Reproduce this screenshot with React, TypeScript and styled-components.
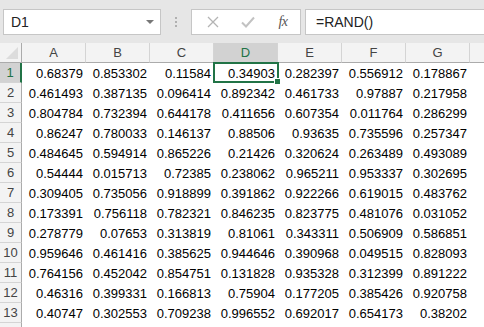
import React from "react";
import styled, { createGlobalStyle } from "styled-components";

const GREEN = "#217346";

const COLUMNS = ["A", "B", "C", "D", "E", "F", "G"];

const DATA: string[][] = [
  ["0.68379", "0.853302", "0.11584", "0.34903", "0.282397", "0.556912", "0.178867"],
  ["0.461493", "0.387135", "0.096414", "0.892342", "0.461733", "0.97887", "0.217958"],
  ["0.804784", "0.732394", "0.644178", "0.411656", "0.607354", "0.011764", "0.286299"],
  ["0.86247", "0.780033", "0.146137", "0.88506", "0.93635", "0.735596", "0.257347"],
  ["0.484645", "0.594914", "0.865226", "0.21426", "0.320624", "0.263489", "0.493089"],
  ["0.54444", "0.015713", "0.72385", "0.238062", "0.965211", "0.953337", "0.302695"],
  ["0.309405", "0.735056", "0.918899", "0.391862", "0.922266", "0.619015", "0.483762"],
  ["0.173391", "0.756118", "0.782321", "0.846235", "0.823775", "0.481076", "0.031052"],
  ["0.278779", "0.07653", "0.313819", "0.81061", "0.343311", "0.506909", "0.586851"],
  ["0.959646", "0.461416", "0.385625", "0.944646", "0.390968", "0.049515", "0.828093"],
  ["0.764156", "0.452042", "0.854751", "0.131828", "0.935328", "0.312399", "0.891222"],
  ["0.46316", "0.399331", "0.166813", "0.75904", "0.177205", "0.385426", "0.920758"],
  ["0.40747", "0.302553", "0.709238", "0.996552", "0.692017", "0.654173", "0.38202"],
];

const ACTIVE_ROW = 0;
const ACTIVE_COL = 3;

const App = () => {
  return (
    <>
      <GlobalStyle />
      <S.Page>
        <S.Toolbar>
          <S.NameBox>
            <span>D1</span>
            <S.Caret />
          </S.NameBox>
          <S.Grip>
            <i />
            <i />
            <i />
          </S.Grip>
          <S.ButtonBox>
            <S.IconSlot>
              <svg width="12" height="12" viewBox="0 0 12 12">
                <path d="M1 1 L11 11 M11 1 L1 11" stroke="#b4b4b4" strokeWidth="1.3" fill="none" />
              </svg>
            </S.IconSlot>
            <S.IconSlot>
              <svg width="14" height="12" viewBox="0 0 14 12">
                <path d="M1 6.5 L5 10.5 L13 1.5" stroke="#c2c2c2" strokeWidth="2" fill="none" />
              </svg>
            </S.IconSlot>
            <S.IconSlot>
              <S.Fx>fx</S.Fx>
            </S.IconSlot>
          </S.ButtonBox>
          <S.FormulaBox>=RAND()</S.FormulaBox>
        </S.Toolbar>

        <S.Sheet>
          <S.Corner>
            <svg width="12" height="12" viewBox="0 0 12 12">
              <path d="M12 0 L12 12 L0 12 Z" fill="#dcdcdc" />
            </svg>
          </S.Corner>
          {COLUMNS.map((c, i) => (
            <S.ColHeader key={c} $active={i === ACTIVE_COL}>
              {c}
            </S.ColHeader>
          ))}
          <S.ColHeader $active={false} $last />

          {DATA.map((row, r) => (
            <React.Fragment key={r}>
              <S.RowHeader $active={r === ACTIVE_ROW}>{r + 1}</S.RowHeader>
              {row.map((v, c) => (
                <S.Cell key={c}>
                  {v}
                  {r === ACTIVE_ROW && c === ACTIVE_COL && (
                    <S.Selection>
                      <S.Handle />
                    </S.Selection>
                  )}
                </S.Cell>
              ))}
              <S.Cell />
            </React.Fragment>
          ))}
          {/* row 14 is only a sliver at the bottom edge, so its label stays out of view */}
          <S.RowHeader $active={false} />
        </S.Sheet>
      </S.Page>
    </>
  );
};

const GlobalStyle = createGlobalStyle`
  html, body {
    margin: 0;
    padding: 0;
    background: #ffffff;
    overflow: hidden;
  }
`;

const S = {
  Page: styled.div`
    width: 484px;
    height: 327px;
    overflow: hidden;
    font-family: "Liberation Sans", Arial, sans-serif;
    color: #000;
  `,

  Toolbar: styled.div`
    display: flex;
    align-items: flex-start;

    height: 43px;
    box-sizing: border-box;
    padding: 9px 0 0 3px;

    background: #e6e6e6;
  `,

  NameBox: styled.div`
    display: flex;
    align-items: center;
    justify-content: space-between;

    width: 158px;
    height: 26px;
    box-sizing: border-box;
    padding: 0 6px 0 7px;

    background: #fff;
    border: 1px solid #c6c6c6;

    font-size: 14px;
    color: #222;
  `,

  Caret: styled.div`
    width: 0;
    height: 0;
    border-left: 4px solid transparent;
    border-right: 4px solid transparent;
    border-top: 4px solid #777;
  `,

  Grip: styled.div`
    display: flex;
    flex-direction: column;
    align-items: center;
    gap: 2px;

    width: 30px;
    padding-top: 8px;

    i {
      display: block;
      width: 2px;
      height: 2px;
      background: #b0b0b0;
    }
  `,

  ButtonBox: styled.div`
    display: flex;
    align-items: center;
    justify-content: space-between;

    width: 110px;
    height: 26px;
    box-sizing: border-box;
    padding: 0 9px 0 13px;

    background: #fff;
    border: 1px solid #c6c6c6;
  `,

  IconSlot: styled.div`
    display: flex;
    align-items: center;
    justify-content: center;
    width: 16px;
    height: 16px;
  `,

  Fx: styled.span`
    font-family: "Liberation Serif", "Times New Roman", serif;
    font-style: italic;
    font-size: 14px;
    color: #555;
    letter-spacing: -0.5px;
  `,

  FormulaBox: styled.div`
    display: flex;
    align-items: center;
    flex: 1;

    height: 26px;
    box-sizing: border-box;
    margin-left: 4px;
    padding-left: 10px;

    background: #fff;
    border: 1px solid #c6c6c6;
    border-right: none;

    font-size: 14px;
    color: #222;
  `,

  Sheet: styled.div`
    display: grid;
    grid-template-columns: 22px repeat(7, 64px) 1fr;
    grid-auto-rows: 20px;
    font-size: 13px;
  `,

  Corner: styled.div`
    display: flex;
    align-items: flex-end;
    justify-content: flex-end;
    box-sizing: border-box;
    padding: 0 3px 3px 0;

    background: #f3f3f3;
    border-right: 1px solid #ababab;
    border-bottom: 1px solid #ababab;
  `,

  ColHeader: styled.div<{ $active: boolean; $last?: boolean }>`
    display: flex;
    align-items: center;
    justify-content: center;
    box-sizing: border-box;

    background: ${({ $active }) => ($active ? "#d2d2d2" : "#f3f3f3")};
    border-right: ${({ $last }) => ($last ? "none" : "1px solid #d4d4d4")};
    border-bottom: 1px solid ${({ $active }) => ($active ? GREEN : "#ababab")};

    color: ${({ $active }) => ($active ? GREEN : "#444")};
    font-size: 13px;
  `,

  RowHeader: styled.div<{ $active: boolean }>`
    display: flex;
    align-items: center;
    justify-content: center;
    box-sizing: border-box;
    grid-column: 1;

    background: ${({ $active }) => ($active ? "#d2d2d2" : "#f3f3f3")};
    border-right: ${({ $active }) => ($active ? `2px solid ${GREEN}` : "1px solid #ababab")};
    border-bottom: 1px solid #d4d4d4;

    color: ${({ $active }) => ($active ? GREEN : "#444")};
    font-size: 13px;
  `,

  Cell: styled.div`
    position: relative;
    display: flex;
    align-items: center;
    justify-content: flex-end;
    box-sizing: border-box;
    padding-right: 3px;
    white-space: nowrap;
  `,

  Selection: styled.div`
    position: absolute;
    top: -1px;
    left: -1px;
    right: -1px;
    bottom: 0;
    border: 2px solid ${GREEN};
    pointer-events: none;
  `,

  Handle: styled.div`
    position: absolute;
    right: -4px;
    bottom: -4px;
    width: 5px;
    height: 5px;
    background: ${GREEN};
    border: 1px solid #fff;
  `,
};

export default App;
